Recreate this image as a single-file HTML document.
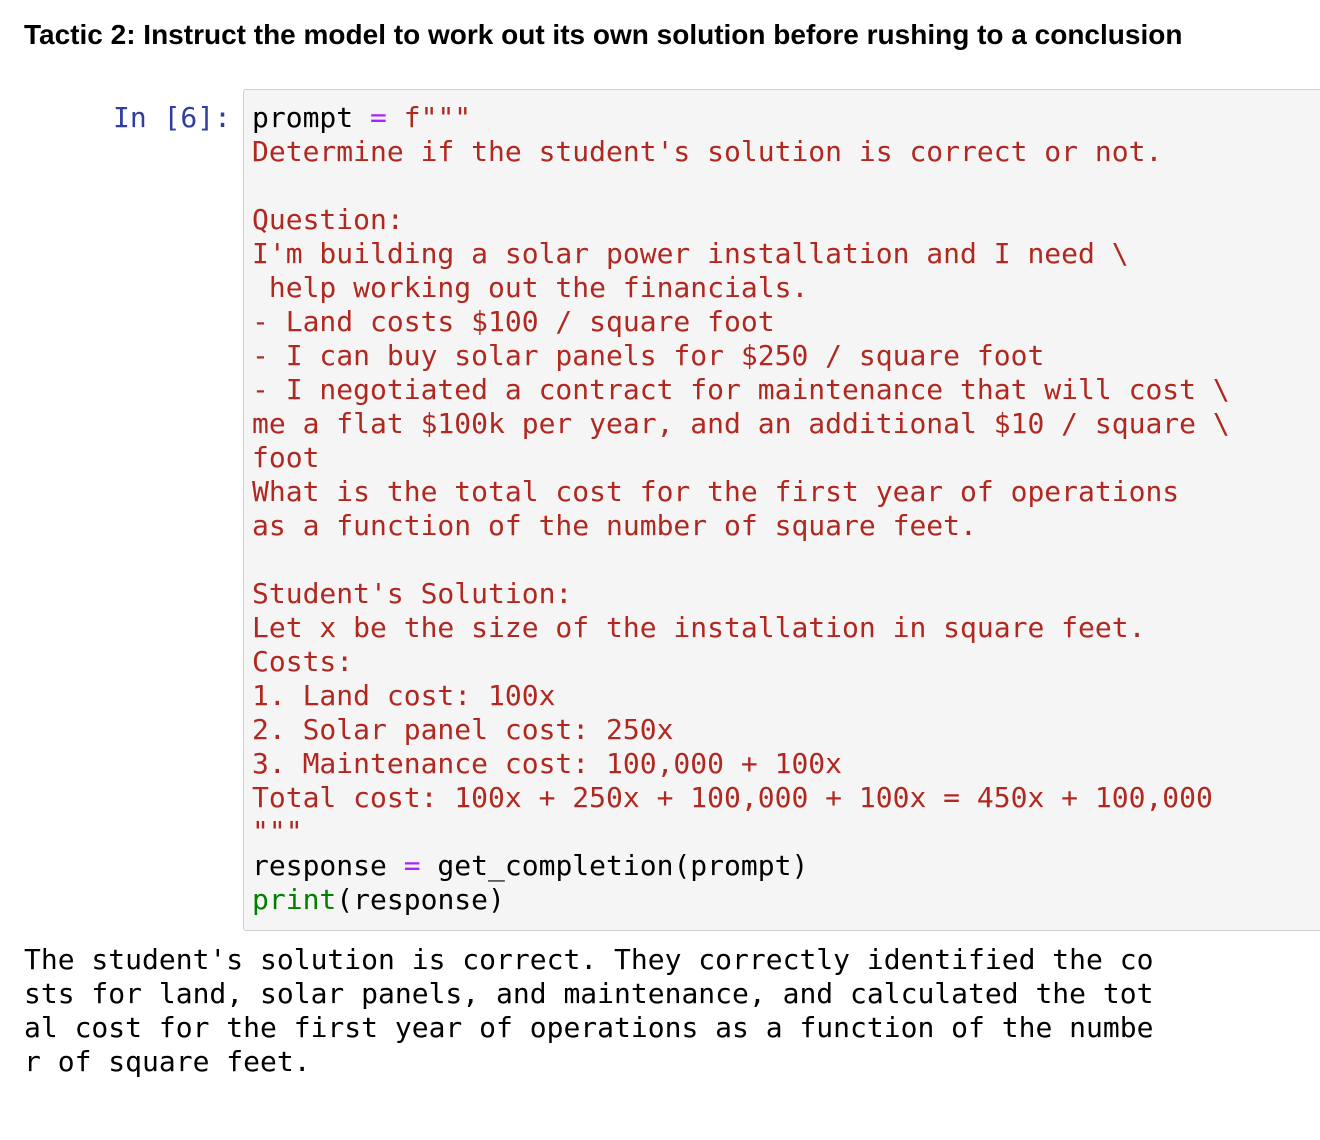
<!DOCTYPE html>
<html><head><meta charset="utf-8"><style>
body{margin:0;background:#fff;width:1320px;height:1140px;overflow:hidden;position:relative}
h1{position:absolute;left:24px;top:19px;margin:0;font:bold 28px "Liberation Sans",sans-serif;color:#000;letter-spacing:0}
.pr{position:absolute;left:113px;top:101px;font:28px/34px "DejaVu Sans Mono",monospace;color:#303f9f}
.box{position:absolute;left:243px;top:89px;width:1090px;height:842px;background:#f5f5f5;border:1px solid #cfcfcf;border-radius:3px;box-sizing:border-box}
pre{margin:0;font:28px/34px "DejaVu Sans Mono",monospace;white-space:pre}
.code{position:absolute;left:252px;top:101px;color:#000}
.s{color:#b0281f}.o{color:#aa22ff}.g{color:#008000}
.out{position:absolute;left:24px;top:943px;color:#000}
</style></head><body>
<h1>Tactic 2: Instruct the model to work out its own solution before rushing to a conclusion</h1>
<div class="pr">In [6]:</div>
<div class="box"></div>
<pre class="code">prompt <span class="o">=</span> <span class="s">f"""
Determine if the student's solution is correct or not.

Question:
I'm building a solar power installation and I need \
 help working out the financials.
- Land costs $100 / square foot
- I can buy solar panels for $250 / square foot
- I negotiated a contract for maintenance that will cost \
me a flat $100k per year, and an additional $10 / square \
foot
What is the total cost for the first year of operations
as a function of the number of square feet.

Student's Solution:
Let x be the size of the installation in square feet.
Costs:
1. Land cost: 100x
2. Solar panel cost: 250x
3. Maintenance cost: 100,000 + 100x
Total cost: 100x + 250x + 100,000 + 100x = 450x + 100,000
"""</span>
response <span class="o">=</span> get_completion(prompt)
<span class="g">print</span>(response)</pre>
<pre class="out">The student's solution is correct. They correctly identified the co
sts for land, solar panels, and maintenance, and calculated the tot
al cost for the first year of operations as a function of the numbe
r of square feet.</pre>
</body></html>
